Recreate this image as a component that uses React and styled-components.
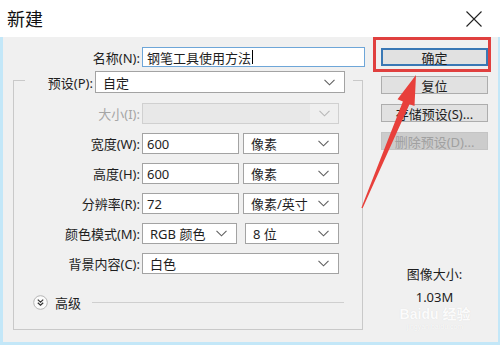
import React from 'react';
import styled, { createGlobalStyle } from 'styled-components';

const GlobalStyle = createGlobalStyle`
  html, body {
    margin: 0;
    padding: 0;
  }
  body {
    font-family: "Noto Sans", "Noto Sans CJK SC", sans-serif;
    font-size: 13px;
    color: #1e1e1e;
  }
`;

const Frame = styled.div`
  position: relative;
  width: 500px;
  height: 345px;
  box-sizing: border-box;
  padding: 0 2px 3px 3px;
  background: #c3e7f8;
  display: flex;
  flex-direction: column;
  overflow: hidden;
`;

const TitleBar = styled.div`
  height: 37px;
  margin-left: -3px;
  margin-right: -2px;
  padding: 0 18px 0 7px;
  background: #ffffff;
  display: flex;
  align-items: center;
  justify-content: space-between;
`;

const Title = styled.div`
  font-size: 18px;
  color: #111;
  line-height: 1;
  margin-top: 1px;
`;

const Body = styled.div`
  flex: 1;
  background: #f0f0f0;
  display: flex;
`;

const LeftColumn = styled.div`
  width: 367px;
  padding-top: 10px;
  display: flex;
  flex-direction: column;
`;

const NameRow = styled.div`
  display: flex;
  align-items: center;
  gap: 2px;
`;

const Label = styled.div`
  width: ${(p) => p.$w || 126}px;
  text-align: right;
  white-space: nowrap;
  color: ${(p) => (p.$disabled ? '#a6a6a6' : '#1e1e1e')};
  flex-shrink: 0;
`;

const TextBox = styled.div`
  width: ${(p) => p.$w}px;
  height: ${(p) => p.$h || 21}px;
  box-sizing: border-box;
  background: #fff;
  border: 1px solid ${(p) => (p.$focus ? '#6ea6d8' : '#a3a3a3')};
  padding-left: 4px;
  display: flex;
  align-items: center;
  white-space: nowrap;
`;

const Caret = styled.span`
  display: inline-block;
  width: 1px;
  height: 14px;
  background: #000;
  margin-left: 1px;
`;

const Group = styled.fieldset`
  margin: 0 0 0 10px;
  width: 350px;
  box-sizing: border-box;
  padding: 10px 0 19px 0;
  border: 1px solid #c9c9c9;
  display: flex;
  flex-direction: column;
  gap: 9px;
`;

const Legend = styled.legend`
  margin-left: 11px;
  padding: 4px 8px 0 0;
  display: flex;
  align-items: center;
  gap: 2px;
`;

const Row = styled.div`
  display: flex;
  align-items: center;
  height: 21px;
  gap: 2px;
`;

const Pair = styled.div`
  display: flex;
  gap: ${(p) => p.$gap}px;
`;

const Select = styled.div`
  width: ${(p) => p.$w}px;
  height: ${(p) => p.$h || 21}px;
  box-sizing: border-box;
  background: ${(p) => (p.$disabled ? '#e8e8e8' : '#fff')};
  border: 1px solid ${(p) => (p.$disabled ? '#d0d0d0' : '#a3a3a3')};
  padding: 0 9px 0 7px;
  display: flex;
  align-items: center;
  justify-content: space-between;
  white-space: nowrap;
  color: #1e1e1e;
`;

const ChevronBox = styled.div`
  display: flex;
  align-items: center;
  justify-content: center;
  height: 100%;
  margin-right: ${(p) => (p.$boxed ? '-9px' : '0')};
  width: ${(p) => (p.$boxed ? '28px' : 'auto')};
  background: ${(p) => (p.$boxed ? '#efefef' : 'transparent')};
`;

const Advanced = styled.div`
  margin-top: 11px;
  margin-left: 19px;
  height: 16px;
  display: flex;
  align-items: center;
  gap: 7px;
  padding-right: 18px;
`;

const Rule = styled.div`
  flex: 1;
  height: 1px;
  background: #cfcfcf;
  margin-left: 4px;
`;

const RightColumn = styled.div`
  margin-left: 11px;
  width: 107px;
  padding: 11px 0 36px;
  display: flex;
  flex-direction: column;
  gap: 10px;
`;

const Button = styled.div`
  height: 18px;
  box-sizing: border-box;
  background: ${(p) => (p.$disabled ? '#cccccc' : '#e1e1e1')};
  border: ${(p) => (p.$default ? '2px solid #3a78b5' : `1px solid ${p.$disabled ? '#c4c4c4' : '#adadad'}`)};
  color: ${(p) => (p.$disabled ? '#a0a0a0' : '#1e1e1e')};
  display: flex;
  align-items: center;
  justify-content: center;
  font-size: 13px;
  white-space: nowrap;
`;

const SizeInfo = styled.div`
  margin-top: auto;
  display: flex;
  flex-direction: column;
  align-items: center;
  gap: 5px;
  line-height: 18px;
`;

const Overlay = styled.svg`
  position: absolute;
  left: 0;
  top: 0;
  pointer-events: none;
`;

const Watermark = styled.div`
  position: absolute;
  left: 398px;
  top: 307px;
  width: 74px;
  display: flex;
  flex-direction: column;
  align-items: center;
  white-space: nowrap;
  color: rgba(255, 255, 255, 0.92);
  text-shadow: 0 0 1px rgba(0, 0, 0, 0.1);
  pointer-events: none;
`;

const MarkBig = styled.div`
  font-family: "Liberation Sans", "Noto Sans CJK SC", sans-serif;
  font-size: 14px;
  font-weight: bold;
  line-height: 15px;
`;

const MarkSmall = styled.div`
  font-family: "Liberation Sans", sans-serif;
  font-size: 7px;
  line-height: 9px;
  color: rgba(255, 255, 255, 0.85);
`;

const Chevron = ({ color = '#606060' }) => (
  <svg width="11" height="7" viewBox="0 0 11 7">
    <polyline points="0.5,0.8 5.5,5.8 10.5,0.8" fill="none" stroke={color} strokeWidth="1.1" />
  </svg>
);

const CloseIcon = () => (
  <svg width="16" height="16" viewBox="0 0 16 16">
    <path d="M0.5 0.5 L15.5 15.5 M15.5 0.5 L0.5 15.5" stroke="#222" strokeWidth="1.1" />
  </svg>
);

const ExpandIcon = () => (
  <svg width="15" height="15" viewBox="0 0 15 15">
    <circle cx="7.5" cy="7.5" r="6.8" fill="#fbfbfb" stroke="#b5b5b5" />
    <polyline points="4.8,4.6 7.5,7.1 10.2,4.6" fill="none" stroke="#333" strokeWidth="1.2" />
    <polyline points="4.8,7.8 7.5,10.3 10.2,7.8" fill="none" stroke="#333" strokeWidth="1.2" />
  </svg>
);

const DropDown = ({ w, value, disabled, boxed }) => (
  <Select $w={w} $disabled={disabled}>
    <span>{value}</span>
    <ChevronBox $boxed={boxed}>
      <Chevron color={disabled ? '#b8b8b8' : '#606060'} />
    </ChevronBox>
  </Select>
);

const Arrow = () => (
  <polygon
    fill="#e8403b"
    points="416,75 414.5,106 409.5,104.2 362.6,208.3 361.4,207.8 402.9,101.4 397.5,99.2"
  />
);

export default function App() {
  return (
    <>
      <GlobalStyle />
      <Frame>
        <TitleBar>
          <Title>新建</Title>
          <CloseIcon />
        </TitleBar>
        <Body>
          <LeftColumn>
            <NameRow>
              <Label $w={137}>名称(N):</Label>
              <TextBox $w={223} $h={20} $focus>
                钢笔工具使用方法<Caret />
              </TextBox>
            </NameRow>
            <Group>
              <Legend>
                <Label $w={68}>预设(P):</Label>
                <Select $w={250} $h={22}>
                  <span>自定</span>
                  <Chevron />
                </Select>
              </Legend>
              <Row>
                <Label $disabled>大小(I):</Label>
                <DropDown w={197} value="" disabled boxed />
              </Row>
              <Row>
                <Label>宽度(W):</Label>
                <Pair $gap={4}>
                  <TextBox $w={97}>600</TextBox>
                  <DropDown w={96} value="像素" />
                </Pair>
              </Row>
              <Row>
                <Label>高度(H):</Label>
                <Pair $gap={4}>
                  <TextBox $w={97}>600</TextBox>
                  <DropDown w={96} value="像素" />
                </Pair>
              </Row>
              <Row>
                <Label>分辨率(R):</Label>
                <Pair $gap={4}>
                  <TextBox $w={97}>72</TextBox>
                  <DropDown w={96} value="像素/英寸" />
                </Pair>
              </Row>
              <Row>
                <Label>颜色模式(M):</Label>
                <Pair $gap={8}>
                  <DropDown w={95} value="RGB 颜色" />
                  <DropDown w={94} value="8 位" />
                </Pair>
              </Row>
              <Row>
                <Label>背景内容(C):</Label>
                <DropDown w={197} value="白色" />
              </Row>
              <Advanced>
                <ExpandIcon />
                <span>高级</span>
                <Rule />
              </Advanced>
            </Group>
          </LeftColumn>
          <RightColumn>
            <Button $default>确定</Button>
            <Button>复位</Button>
            <Button>存储预设(S)...</Button>
            <Button $disabled>删除预设(D)...</Button>
            <SizeInfo>
              <span>图像大小:</span>
              <span>1.03M</span>
            </SizeInfo>
          </RightColumn>
        </Body>
        <Watermark>
          <MarkBig>Baidu 经验</MarkBig>
          <MarkSmall>jingyan.baidu.com</MarkSmall>
        </Watermark>
        <Overlay width="500" height="345" viewBox="0 0 500 345">
          <rect x="374.5" y="38.5" width="115" height="32" fill="none" stroke="#e0403f" strokeWidth="3" />
          <Arrow />
        </Overlay>
      </Frame>
    </>
  );
}
